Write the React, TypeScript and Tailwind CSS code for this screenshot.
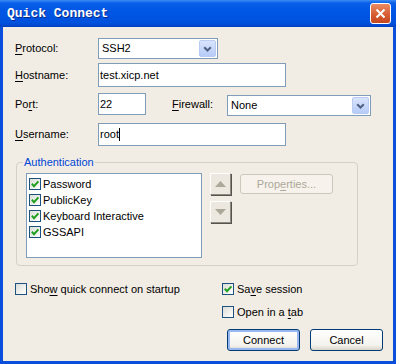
import React from "react";

function U({ children }: { children: React.ReactNode }) {
  return <span className="underline underline-offset-[2px] decoration-[1px]">{children}</span>;
}

function Check({ checked }: { checked?: boolean }) {
  return (
    <span className="w-[12px] h-[12px] border border-[#1c5180] bg-linear-to-br from-[#dcdcd7] to-white flex items-center justify-center shrink-0">
      {checked && (
        <svg width="10" height="10" viewBox="0 0 10 10">
          <path d="M1.8 4.8 L4 7.2 L8.4 2.4" stroke="#21a121" strokeWidth="2" fill="none" />
        </svg>
      )}
    </span>
  );
}

function DropBtn() {
  return (
    <span className="w-[17px] h-[17px] rounded-[2px] bg-[linear-gradient(180deg,#d9e4fd,#b6cbf6)] border border-[#b9cbf3] flex items-center justify-center shrink-0">
      <svg width="9" height="6" viewBox="0 0 9 6">
        <path d="M1.2 1.2 L4.5 4.5 L7.8 1.2" stroke="#4d6185" strokeWidth="2" fill="none" />
      </svg>
    </span>
  );
}

function Select({ w, text }: { w: string; text: string }) {
  return (
    <div className={`${w} h-[21px] border border-[#7f9db9] bg-white flex items-center justify-between pl-[3px] pr-[1px]`}>
      <span>{text}</span>
      <DropBtn />
    </div>
  );
}

function XPButton({ children, def, w }: { children: React.ReactNode; def?: boolean; w: string }) {
  return (
    <div
      className={`${w} h-[22px] rounded-[3px] border border-[#003c74] bg-[linear-gradient(180deg,#ffffff,#f4f3ee_75%,#d9d5ca)] flex items-center justify-center ${
        def ? "shadow-[inset_0_0_0_2px_#98b6f0]" : ""
      }`}
    >
      {children}
    </div>
  );
}

function ArrowBtn({ up }: { up?: boolean }) {
  return (
    <div className="w-[21px] h-[22px] bg-[#ece8df] border-t border-l border-t-white border-l-white border-r border-b border-r-[#8c8a80] border-b-[#8c8a80] shadow-[1px_1px_0_#55534c] flex items-center justify-center">
      <svg width="11" height="6" viewBox="0 0 11 6">
        {up ? <path d="M0 6 L5.5 0 L11 6 Z" fill="#aca899" /> : <path d="M0 0 L5.5 6 L11 0 Z" fill="#aca899" />}
      </svg>
    </div>
  );
}

export default function App() {
  return (
    <div className="w-[396px] h-[364px] flex flex-col font-['Liberation_Sans',Arial,sans-serif] text-[11px] text-black">
      {/* Title bar */}
      <div className="h-[27px] shrink-0 flex items-center justify-between bg-[linear-gradient(180deg,#3d8df5_0px,#0a5fe8_3px,#0056e5_40%,#0051dd_85%,#0040c2_100%)]">
        <span className="pl-[7px] text-white font-bold text-[13px] font-['Liberation_Mono',monospace] [text-shadow:1px_1px_0_#0a2a8a]">
          Quick Connect
        </span>
        <div className="mr-[5px] w-[21px] h-[21px] rounded-[3px] border border-white bg-[linear-gradient(180deg,#e98a63,#d55a30_60%,#c4461e)] flex items-center justify-center">
          <svg width="13" height="13" viewBox="0 0 13 13">
            <path d="M2.5 2.5 L10.5 10.5 M10.5 2.5 L2.5 10.5" stroke="white" strokeWidth="2" />
          </svg>
        </div>
      </div>

      {/* Body */}
      <div className="flex-1 flex bg-[#0a4fdc] px-[3px] pb-[3px]">
        <div className="flex-1 bg-[#f2ede4] flex flex-col">
          {/* Protocol */}
          <div className="flex items-center h-[21px] mt-[11px] pl-[12px]">
            <span className="w-[83px]">
              <U>P</U>rotocol:
            </span>
            <Select w="w-[120px]" text="SSH2" />
          </div>
          {/* Hostname */}
          <div className="flex items-center h-[24px] mt-[4px] pl-[12px]">
            <span className="w-[83px]">
              <U>H</U>ostname:
            </span>
            <div className="w-[188px] h-[24px] border border-[#7f9db9] bg-white flex items-center pl-[1px]">
              test.xicp.net
            </div>
          </div>
          {/* Port / Firewall */}
          <div className="flex items-start h-[23px] mt-[6px] pl-[12px]">
            <span className="w-[83px] h-[22px] flex items-center">
              Po<U>r</U>t:
            </span>
            <div className="w-[48px] h-[22px] border border-[#7f9db9] bg-white flex items-center pl-[1px]">22</div>
            <span className="ml-[26px] w-[55px] h-[23px] flex items-center">
              <U>F</U>irewall:
            </span>
            <div className="mt-[2px]">
              <Select w="w-[144px]" text="None" />
            </div>
          </div>
          {/* Username */}
          <div className="flex items-center h-[23px] mt-[7px] pl-[12px]">
            <span className="w-[83px]">
              <U>U</U>sername:
            </span>
            <div className="w-[188px] h-[23px] border border-[#7f9db9] bg-white flex items-center pl-[1px]">
              root<span className="inline-block w-px h-[13px] bg-black" />
            </div>
          </div>

          {/* Authentication */}
          <fieldset className="mt-[9px] ml-[13px] w-[342px] border border-[#d5d2c5] rounded-[4px] pl-[9px] pt-[4px] pb-[7px]">
            <legend className="ml-[-3px] px-[1px] text-[#0046d5] leading-[14px]">Authentication</legend>
            <div className="flex items-start">
              <div className="w-[176px] h-[85px] border border-[#7f9db9] bg-white pt-[2px] pl-[2px] flex flex-col">
                {["Password", "PublicKey", "Keyboard Interactive", "GSSAPI"].map((t) => (
                  <div key={t} className="h-[16px] flex items-center gap-[2px]">
                    <Check checked />
                    <span>{t}</span>
                  </div>
                ))}
              </div>
              <div className="ml-[8px] flex flex-col gap-[6px]">
                <ArrowBtn up />
                <ArrowBtn />
              </div>
              <div className="ml-[9px] mt-[1px] w-[93px] h-[20px] rounded-[3px] border border-[#cac8bb] bg-[#f7f3ec] text-[#aca899] flex items-center justify-center">
                Prop<U>e</U>rties...
              </div>
            </div>
          </fieldset>

          {/* Bottom */}
          <div className="flex mt-[15px]">
            <div className="w-[219px] pl-[12px]">
              <div className="h-[16px] flex items-center gap-[3px]">
                <Check />
                <span>
                  Sho<U>w</U> quick connect on startup
                </span>
              </div>
            </div>
            <div className="flex flex-col">
              <div className="h-[16px] flex items-center gap-[3px]">
                <Check checked />
                <span>
                  Sa<U>v</U>e session
                </span>
              </div>
              <div className="h-[16px] mt-[7px] flex items-center gap-[3px]">
                <Check />
                <span>
                  Open in a <U>t</U>ab
                </span>
              </div>
              <div className="mt-[9px] ml-[5px] flex gap-[10px]">
                <XPButton def w="w-[73px]">
                  Connect
                </XPButton>
                <XPButton w="w-[73px]">Cancel</XPButton>
              </div>
            </div>
          </div>
        </div>
      </div>
    </div>
  );
}
